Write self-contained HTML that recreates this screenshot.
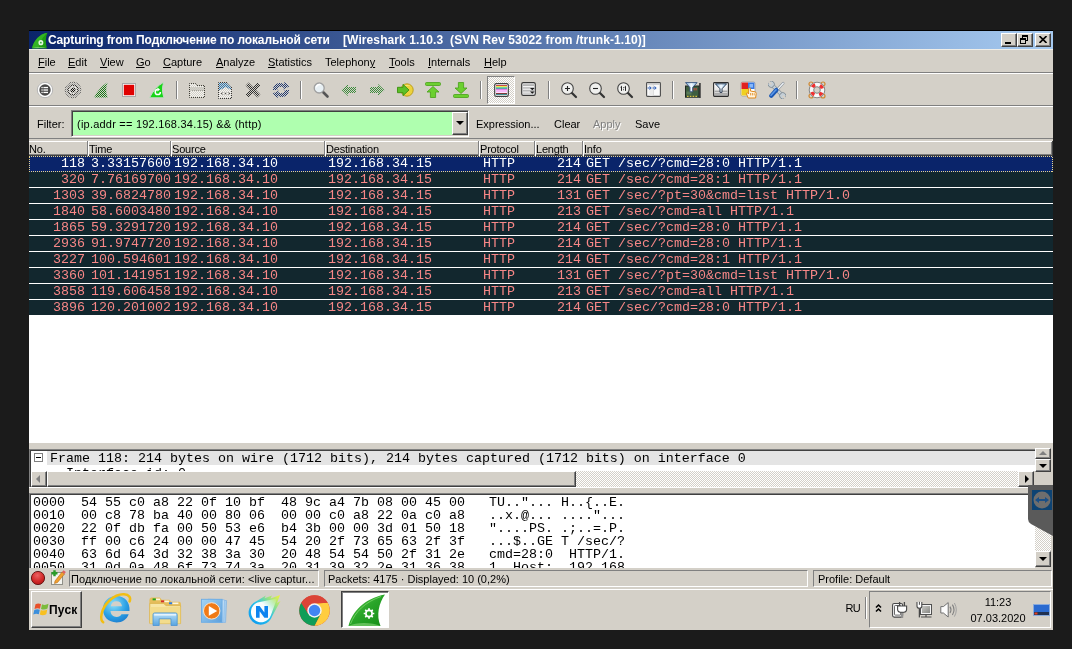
<!DOCTYPE html>
<html><head><meta charset="utf-8">
<style>
*{box-sizing:border-box;margin:0;padding:0}
html,body{width:1072px;height:649px;overflow:hidden;background:#1b1b1b;font-family:"Liberation Sans",sans-serif;font-size:11px;color:#000}
#pg{will-change:transform;position:absolute;left:0;top:0;width:1072px;height:649px;overflow:hidden}
.a{position:absolute}
.win{left:29px;top:30px;width:1024px;height:600px;background:#d4d0c8}
#title{left:29px;top:31px;width:1024px;height:18px;background:linear-gradient(to right,#0a246a 0%,#a6caf0 100%);color:#fff;font-weight:bold;font-size:12px;line-height:18px;white-space:nowrap}
#title span{position:absolute;top:0;white-space:pre}
.tb{top:33px;width:16px;height:14px;background:#d4d0c8;border:1px solid;border-color:#fff #404040 #404040 #fff;box-shadow:inset -1px -1px 0 #808080}
.mn{top:56px;font-size:11px;line-height:13px;white-space:pre}
.hl{left:29px;width:1024px;height:1px}
.tx{font-size:11px;line-height:13px;white-space:pre}
.vsep{top:81px;width:2px;height:18px;border-left:1px solid #808080;border-right:1px solid #fff}
.ic{width:20px;height:20px;top:80px}
.hd{top:141px;height:15px;font-size:11px;line-height:17px;letter-spacing:-0.2px;padding-left:0;border-left:1px solid #fff;box-shadow:-1px 0 0 #808080;white-space:pre}
.row{position:absolute;left:29px;width:1024px;height:16px;background:#12272e;color:#f78787;font-family:"Liberation Mono",monospace;font-size:13.33px;line-height:16px;border-bottom:1px solid #fff;white-space:pre;overflow:hidden}
.row.sel{background:#0a246a;color:#fff;border-bottom:none;z-index:2}
.foc{position:absolute;left:29px;top:156px;width:1024px;height:16px;z-index:3;background:repeating-linear-gradient(90deg,#e8d48c 0 1px,transparent 1px 2px) top/100% 1px no-repeat,repeating-linear-gradient(90deg,#e8d48c 0 1px,transparent 1px 2px) bottom/100% 1px no-repeat,repeating-linear-gradient(0deg,#e8d48c 0 1px,transparent 1px 2px) left/1px 100% no-repeat,repeating-linear-gradient(0deg,#e8d48c 0 1px,transparent 1px 2px) right/1px 100% no-repeat}
.c{position:absolute;top:0}
.no{left:0;width:56px;text-align:right}
.tm{left:62px}
.src{left:145px}
.dst{left:299px}
.pr{left:454px}
.ln{left:501px;width:51px;text-align:right}
.inf{left:557px}
.hx{position:absolute;left:0;height:13px;font-family:"Liberation Mono",monospace;font-size:13.33px;line-height:13px;white-space:pre;color:#000}
.hx span{position:absolute;top:0}
.btn{background:#d4d0c8;border:1px solid;border-color:#fff #404040 #404040 #fff;box-shadow:inset -1px -1px 0 #808080,inset 1px 1px 0 #d4d0c8}
.sbtn{background:#d4d0c8;border:1px solid;border-color:#d4d0c8 #404040 #404040 #d4d0c8;box-shadow:inset -1px -1px 0 #808080,inset 1px 1px 0 #fff}
.chk{background-color:#fff;background-image:conic-gradient(#d4d0c8 25%,#fff 0 50%,#d4d0c8 0 75%,#fff 0);background-size:2px 2px}
.sunk{border:1px solid;border-color:#808080 #fff #fff #808080}
</style></head><body><div id="pg">
<div class="a" style="left:29px;top:30px;width:1024px;height:1px;background:#000"></div>
<div class="a win" style="top:31px;height:599px"></div>
<!-- TITLE -->
<div class="a" id="title">
 <span style="left:19px;letter-spacing:-0.125px" id="t1">Capturing from Подключение по локальной сети</span>
 <span style="left:314px;letter-spacing:0.095px" id="t2">[Wireshark 1.10.3  (SVN Rev 53022 from /trunk-1.10)]</span>
</div>
<svg class="a" style="left:30.5px;top:31.5px" width="17.5" height="17" viewBox="0 0 17 16" preserveAspectRatio="none"><path d="M1 15.2 C3 8 8 2 16 0.8 C14 5 14 10 15.4 15.2 Z" fill="#1f9c12"/><path d="M1 15.2 C3 8 8 2 16 0.8 C12 4 8.5 9 7.5 15.2Z" fill="#34b424"/><path d="M1 15.2 C5 13.6 11 13.6 15.4 15.2Z" fill="#86d67a" opacity=".7"/><circle cx="9.6" cy="10" r="2.4" fill="#e4f6e0"/><circle cx="9.6" cy="10" r="0.8" fill="#2aa52a"/></svg>
<div class="a tb" style="left:1001px"><div class="a" style="left:3px;top:8px;width:6px;height:2px;background:#000"></div></div>
<div class="a tb" style="left:1017px"><div class="a" style="left:4px;top:1px;width:6px;height:6px;border:1px solid #000;border-top-width:2px"></div><div class="a" style="left:2px;top:4px;width:6px;height:6px;border:1px solid #000;border-top-width:2px;background:#d4d0c8"></div></div>
<div class="a tb" style="left:1035px"><svg class="a" style="left:3px;top:2px" width="8" height="7" viewBox="0 0 8 7"><path d="M0.5 0 L7.5 7 M7.5 0 L0.5 7" stroke="#000" stroke-width="1.6"/></svg></div>
<!-- MENU -->
<div class="a hl" style="top:49px;background:#f0eee8"></div>
<span class="a mn" style="left:38px"><u>F</u>ile</span><span class="a mn" style="left:68px"><u>E</u>dit</span><span class="a mn" style="left:100px"><u>V</u>iew</span><span class="a mn" style="left:136px"><u>G</u>o</span><span class="a mn" style="left:163px"><u>C</u>apture</span><span class="a mn" style="left:216px"><u>A</u>nalyze</span><span class="a mn" style="left:268px"><u>S</u>tatistics</span><span class="a mn" style="left:325px">Telephon<u>y</u></span><span class="a mn" style="left:389px"><u>T</u>ools</span><span class="a mn" style="left:428px"><u>I</u>nternals</span><span class="a mn" style="left:484px"><u>H</u>elp</span>
<div class="a hl" style="top:72px;background:#808080"></div><div class="a hl" style="top:73px;background:#fff"></div>
<!-- TOOLBAR -->
<svg class="a" width="0" height="0" style="left:0;top:0"><defs><pattern id="dz" width="2" height="2" patternUnits="userSpaceOnUse"><rect width="1" height="1" fill="#d4d0c8"/><rect x="1" y="1" width="1" height="1" fill="#d4d0c8"/></pattern></defs></svg>
<svg class="a" style="left:36px;top:81px" width="18" height="18" viewBox="0 0 18 18" ><circle cx="9" cy="9" r="7.7" fill="#fff" stroke="#b4b4b4" stroke-width="1"/><circle cx="9" cy="9" r="5.7" fill="#484848"/><g fill="#fff"><rect x="7.4" y="5.9" width="4.6" height="1.3"/><rect x="7.4" y="8.35" width="4.6" height="1.3"/><rect x="7.4" y="10.8" width="4.6" height="1.3"/><rect x="5.4" y="5.9" width="1.3" height="1.3"/><rect x="5.4" y="8.35" width="1.3" height="1.3"/><rect x="5.4" y="10.8" width="1.3" height="1.3"/></g></svg>
<svg class="a" style="left:64px;top:81px" width="18" height="18" viewBox="0 0 18 18" ><circle cx="9" cy="9" r="7.8" fill="#b8b8b8" stroke="#606060" stroke-width="1"/><circle cx="9" cy="9" r="5.8" fill="#303030"/><circle cx="9" cy="9" r="4" fill="#f4f4f4"/><circle cx="9" cy="9" r="2.6" fill="#101010"/><rect width="18" height="18" fill="url(#dz)"/></svg>
<svg class="a" style="left:92px;top:81px" width="18" height="18" viewBox="0 0 18 18" ><path d="M1.8 16.8 C5 10 9.5 4.5 15.8 1.2 C14 6 14 11.5 15.8 16.8Z" fill="#147814" stroke="#c0d0c0" stroke-width=".6"/><rect width="18" height="18" fill="url(#dz)"/></svg>
<svg class="a" style="left:121px;top:82px" width="16" height="16" viewBox="0 0 16 16" ><rect x="1.5" y="1.5" width="13" height="13" fill="#fafafa" stroke="#a8a8a8" stroke-width="1"/><rect x="2.8" y="2.8" width="10.4" height="10.4" fill="#e00000"/></svg>
<svg class="a" style="left:148px;top:81px" width="18" height="18" viewBox="0 0 18 18" ><path d="M1.5 16.8 C5 10 9.5 4.5 15.8 1.2 C14 6 14 11.5 16 16.8Z" fill="#18d418" stroke="#c8d8c8" stroke-width="1"/><path d="M12.4 11 A2.6 2.6 0 1 1 9.8 8.4" fill="none" stroke="#fff" stroke-width="1.5"/><path d="M9.4 6.4 L12 8.4 L9.4 10.4Z" fill="#fff"/></svg>
<svg class="a" style="left:188px;top:81px" width="18" height="18" viewBox="0 0 18 18" ><path d="M1.5 2.5 h6 l1 2 h8 v12 h-15Z" fill="#f4f4f0" stroke="#404038" stroke-width="1"/><path d="M2.5 9.5 h13" stroke="#a0a098" stroke-width="1"/><path d="M2 6 h14 v3 h-14Z" fill="#c8c8c0"/><rect width="18" height="18" fill="url(#dz)"/></svg>
<svg class="a" style="left:216px;top:81px" width="18" height="18" viewBox="0 0 18 18" ><path d="M2.5 1.5 h8.5 l4.5 4.5 v11.5 h-13Z" fill="#f4f4f2" stroke="#383838" stroke-width="1"/><path d="M3 2 h7.8 l4.2 4.2 v2.8 l-5 -3 l-7 3.5Z" fill="#2878b8"/><path d="M5 11.5h2v2H5zM8.5 11.5h2v2h-2zM12 11.5h2v2h-2z" fill="#505050"/><rect width="18" height="18" fill="url(#dz)"/></svg>
<svg class="a" style="left:244px;top:81px" width="18" height="18" viewBox="0 0 18 18" ><path d="M1.6 4.6 L4.6 1.6 L9 6 L13.4 1.6 L16.4 4.6 L12 9 L16.4 13.4 L13.4 16.4 L9 12 L4.6 16.4 L1.6 13.4 L6 9Z" fill="#303030"/><rect width="18" height="18" fill="url(#dz)"/></svg>
<svg class="a" style="left:272px;top:81px" width="18" height="18" viewBox="0 0 18 18" ><path d="M1 9 C1 3 7 0.6 12 3 L12.6 0.8 L17.2 5.6 L11 8.4 L11.4 6.2 C8.6 5 5.4 6 5.2 9Z" fill="#203870"/><path d="M17 9 C17 15 11 17.4 6 15 L5.4 17.2 L0.8 12.4 L7 9.6 L6.6 11.8 C9.4 13 12.6 12 12.8 9Z" fill="#203870"/><rect width="18" height="18" fill="url(#dz)"/></svg>
<svg class="a" style="left:312px;top:81px" width="18" height="18" viewBox="0 0 18 18" ><path d="M10.5 10.5 L15.5 15.5" stroke="#555" stroke-width="2.6" stroke-linecap="round"/><circle cx="7.2" cy="7" r="5" fill="#e8f0f4" stroke="#a0a0a0" stroke-width="1.3"/><path d="M4.2 6.4 A3.2 3.2 0 0 1 8.5 3.8" stroke="#fff" stroke-width="1.5" fill="none"/></svg>
<svg class="a" style="left:340px;top:81px" width="18" height="18" viewBox="0 0 18 18" ><path d="M1.5 9 L8 3 L8 6 L16 6 L16 12 L8 12 L8 15Z" fill="#3c8c3c"/><rect width="18" height="18" fill="url(#dz)"/></svg>
<svg class="a" style="left:368px;top:81px" width="18" height="18" viewBox="0 0 18 18" ><path d="M16.5 9 L10 3 L10 6 L2 6 L2 12 L10 12 L10 15Z" fill="#3c8c3c"/><rect width="18" height="18" fill="url(#dz)"/></svg>
<svg class="a" style="left:396px;top:81px" width="18" height="18" viewBox="0 0 18 18" ><circle cx="11" cy="9" r="6.2" fill="#ecd23c" stroke="#b89818" stroke-width=".9"/><path d="M8 5 A6 6 0 0 1 15 5.5 A8 8 0 0 0 8 5Z" fill="#fff6b0"/><path d="M1.5 6.3 L7 6.3 L7 3.3 L13 9 L7 14.7 L7 11.7 L1.5 11.7Z" fill="#5cc028" stroke="#3c9010" stroke-width=".9"/></svg>
<svg class="a" style="left:424px;top:81px" width="18" height="18" viewBox="0 0 18 18" ><rect x="1.5" y="1.5" width="15" height="3" rx="1" fill="#6cd030" stroke="#48a018" stroke-width=".8"/><path d="M9 5.5 L15 11 L11.6 11 L11.6 16.5 L6.4 16.5 L6.4 11 L3 11Z" fill="#6cd030" stroke="#48a018" stroke-width=".8"/></svg>
<svg class="a" style="left:452px;top:81px" width="18" height="18" viewBox="0 0 18 18" ><rect x="1.5" y="13.5" width="15" height="3" rx="1" fill="#6cd030" stroke="#48a018" stroke-width=".8"/><path d="M9 12.5 L15 7 L11.6 7 L11.6 1.5 L6.4 1.5 L6.4 7 L3 7Z" fill="#6cd030" stroke="#48a018" stroke-width=".8"/></svg>
<div class="a chk" style="left:487px;top:76px;width:28px;height:28px;border:1px solid;border-color:#808080 #fff #fff #808080"></div>
<svg class="a" style="left:494px;top:82.8px" width="15" height="14" viewBox="0 0 15 14" ><rect x="0.7" y="0.7" width="13.6" height="12.6" rx="1.6" fill="#fff" stroke="#404040" stroke-width="1.2"/><rect x="2" y="2" width="11" height="1" fill="#c84848"/><rect x="2" y="3" width="11" height="1" fill="#f0e850"/><rect x="2" y="4" width="11" height="1" fill="#70d0a0"/><rect x="2" y="5" width="11" height="1" fill="#58a8a8"/><rect x="2" y="6" width="11" height="1" fill="#e878e8"/><rect x="2" y="7" width="11" height="2.4" fill="#f8b8f8"/><rect x="2" y="10" width="11" height="1" fill="#803838"/><rect x="2" y="11" width="11" height="1" fill="#409090"/></svg>
<svg class="a" style="left:520.9px;top:82px" width="15" height="14" viewBox="0 0 15 14" ><rect x="0.7" y="0.7" width="13.6" height="12.6" rx="1.6" fill="#f4f4f4" stroke="#383838" stroke-width="1.2"/><rect x="2" y="2.2" width="11" height="1.8" fill="#b4b4b4"/><rect x="2" y="5" width="11" height="1.8" fill="#c4c4c4"/><rect x="2" y="7.8" width="11" height="1.8" fill="#b8b8b8"/><rect x="2" y="10.4" width="11" height="1.6" fill="#d0d0d0"/><path d="M9 6 h4.6 l-2.3 2.2Z M9 9.6 h4.6 l-2.3 2.2Z" fill="#181818"/></svg>
<svg class="a" style="left:559.5px;top:81px" width="18" height="18" viewBox="0 0 18 18" ><path d="M11.5 11.5 L16 16" stroke="#333" stroke-width="2.2" stroke-linecap="round"/><circle cx="7.5" cy="7.5" r="5.8" fill="#f0f0ee" stroke="#444" stroke-width="1.1"/><path d="M5 7.5h5M7.5 5v5" stroke="#222" stroke-width="1.1"/></svg>
<svg class="a" style="left:587.5px;top:81px" width="18" height="18" viewBox="0 0 18 18" ><path d="M11.5 11.5 L16 16" stroke="#333" stroke-width="2.2" stroke-linecap="round"/><circle cx="7.5" cy="7.5" r="5.8" fill="#f0f0ee" stroke="#444" stroke-width="1.1"/><path d="M5 7.5h5" stroke="#222" stroke-width="1.1"/></svg>
<svg class="a" style="left:616px;top:81px" width="18" height="18" viewBox="0 0 18 18" ><path d="M11.5 11.5 L16 16" stroke="#333" stroke-width="2.2" stroke-linecap="round"/><circle cx="7.5" cy="7.5" r="5.8" fill="#f0f0ee" stroke="#444" stroke-width="1.1"/><path d="M5.5 5.3v4.6M9.5 5.3v4.6M4.6 6.2l.9-.9M8.6 6.2l.9-.9" stroke="#222" stroke-width="1"/><rect x="7.1" y="6.3" width=".9" height=".9" fill="#222"/><rect x="7.1" y="8.3" width=".9" height=".9" fill="#222"/></svg>
<svg class="a" style="left:646px;top:82.1px" width="15" height="15" viewBox="0 0 15 15" ><rect x="0.6" y="0.6" width="13.8" height="13.8" rx=".8" fill="#fafafa" stroke="#4c4c4c" stroke-width="1.1"/><rect x="1.2" y="1.2" width="12.6" height="1.6" fill="#c8c8c8"/><rect x="6.6" y="2.8" width="1.2" height="11" fill="#d8d8d8"/><rect x="3.4" y="2.8" width="3.2" height="11" fill="#ececec"/><path d="M1.6 6h3.4M3.6 4.4L5.2 6L3.6 7.6M6.6 6h3.4M8.6 4.4L10.2 6L8.6 7.6" stroke="#2a5cb8" stroke-width="1" fill="none"/></svg>
<svg class="a" style="left:684px;top:81px" width="18" height="18" viewBox="0 0 18 18" ><defs><linearGradient id="fn" x1="0" y1="0" x2="1" y2="0"><stop offset="0" stop-color="#7ab0e0"/><stop offset=".5" stop-color="#f4faff"/><stop offset="1" stop-color="#8cbce6"/></linearGradient></defs><rect x="15" y="2" width="1.8" height="15" fill="#484848"/><rect x="1.5" y="5" width="13.5" height="11.2" fill="#3e5e40" stroke="#202820" stroke-width="1"/><rect x="2.5" y="10.5" width="5" height="3" fill="#587a58"/><rect x="9.5" y="7" width="1.2" height="2.4" fill="#c05040"/><rect x="11.5" y="7" width="1.2" height="2.4" fill="#c05040"/><path d="M3 15.4h1.6M5.8 15.4h1.6M8.6 15.4h1.6M11.4 15.4h1.6" stroke="#d8c040" stroke-width="1.4"/><path d="M1.5 1.6 h11.6 l-4.4 4.8 v4.4 h-2.8 v-4.4Z" fill="url(#fn)" stroke="#34507a" stroke-width=".9"/></svg>
<svg class="a" style="left:712.5px;top:81.6px" width="16" height="15" viewBox="0 0 16 15" ><defs><linearGradient id="dfb" x1="0" y1="0" x2="0" y2="1"><stop offset="0" stop-color="#ffffff"/><stop offset=".55" stop-color="#e8e8e8"/><stop offset="1" stop-color="#b8b8b8"/></linearGradient></defs><rect x="0.6" y="0.6" width="14.8" height="13.8" rx=".8" fill="url(#dfb)" stroke="#2c2c2c" stroke-width="1.1"/><rect x="1.6" y="8.6" width="12.8" height="1.4" fill="#a8a8a8"/><rect x="1.6" y="11.2" width="12.8" height="1.4" fill="#a0a0a0"/><path d="M2.4 1.8 h11.2 l-4.6 5 v3.6 h-2 v-3.6Z" fill="url(#fn)" stroke="#1c2c44" stroke-width=".9"/></svg>
<svg class="a" style="left:740px;top:81px" width="18" height="18" viewBox="0 0 18 18" ><rect x="1" y="1" width="14" height="14" rx="1.5" fill="#fff" stroke="#888" stroke-width=".6"/><rect x="1.5" y="1.5" width="6.5" height="6.5" fill="#e02020"/><rect x="8" y="1.5" width="6.5" height="6.5" fill="#3878e0"/><rect x="1.5" y="8" width="6.5" height="6.5" fill="#f0d020"/><rect x="9.5" y="3" width="3.5" height="3.5" fill="#88b8f8"/><path d="M8.2 17 L6.3 12.5 L7.6 11.8 L8.6 13 L8.6 7.4 Q9.5 6.4 10.4 7.4 L10.4 10 L15 10.8 Q16.4 11.2 16.2 12.6 L15.6 17Z" fill="#fff4e0" stroke="#e08818" stroke-width="1"/><path d="M10.6 12v2.4M12.4 12v2.4M14.2 12.2v2.2" stroke="#e08818" stroke-width=".8"/></svg>
<svg class="a" style="left:768px;top:81px" width="18" height="18" viewBox="0 0 18 18" ><g transform="rotate(-45 9 9)"><rect x="7.4" y="-0.5" width="3.2" height="19" rx="1" fill="#c4ced6" stroke="#7c8890" stroke-width=".8"/><circle cx="9" cy="0.8" r="3.2" fill="#c4ced6" stroke="#7c8890" stroke-width=".8"/><rect x="7.9" y="-3" width="2.2" height="4" fill="#d4d0c8"/><circle cx="9" cy="17.2" r="3.2" fill="#c4ced6" stroke="#7c8890" stroke-width=".8"/><rect x="7.9" y="17" width="2.2" height="4" fill="#d4d0c8"/></g><path d="M15.2 2.2 L8.6 9.4" stroke="#8c949c" stroke-width="2.6" stroke-linecap="round"/><path d="M15.2 2.2 L8.6 9.4" stroke="#eef2f6" stroke-width="1.3" stroke-linecap="round"/><path d="M8.4 9 L3.2 14.8" stroke="#1c58b4" stroke-width="4.2" stroke-linecap="round"/><path d="M8 8.8 L3 14.2" stroke="#5c98e8" stroke-width="1.6" stroke-linecap="round"/></svg>
<svg class="a" style="left:808px;top:81px" width="18" height="18" viewBox="0 0 18 18" ><g fill="none" stroke="#d08830" stroke-width="1.2"><circle cx="3" cy="3" r="2"/><circle cx="15" cy="3" r="2"/><circle cx="3" cy="15" r="2"/><circle cx="15" cy="15" r="2"/></g><circle cx="9" cy="9" r="5.5" fill="none" stroke="#f8f8f8" stroke-width="4.4"/><circle cx="9" cy="9" r="5.5" fill="none" stroke="#f03030" stroke-width="3.4" stroke-dasharray="3.6 5.04" stroke-dashoffset="-2.52"/><circle cx="9" cy="9" r="7.8" fill="none" stroke="#707070" stroke-width=".8"/><circle cx="9" cy="9" r="3.3" fill="#d4d0c8" stroke="#707070" stroke-width=".8"/></svg>
<div class="a vsep" style="left:176px"></div>
<div class="a vsep" style="left:300px"></div>
<div class="a vsep" style="left:480px"></div>
<div class="a vsep" style="left:548px"></div>
<div class="a vsep" style="left:672px"></div>
<div class="a vsep" style="left:796px"></div>

<div class="a hl" style="top:105px;background:#808080"></div><div class="a hl" style="top:106px;background:#fff"></div>
<!-- FILTER -->
<span class="a tx" style="left:37px;top:118px">Filter:</span>
<div class="a" style="left:71px;top:110px;width:398px;height:27px;background:#afffaf;border:1px solid;border-color:#808080 #fff #fff #808080;box-shadow:inset 1px 1px 0 #404040,inset -1px -1px 0 #d4d0c8"></div>
<span class="a tx" style="left:77px;top:118px;letter-spacing:0.22px" id="ftxt">(ip.addr == 192.168.34.15) &amp;&amp; (http)</span>
<div class="a btn" style="left:452px;top:112px;width:16px;height:23px"><div class="a" style="left:3px;top:8px;border:4px solid transparent;border-top:4px solid #000;border-bottom:none"></div></div>
<span class="a tx" style="left:476px;top:118px">Expression...</span>
<span class="a tx" style="left:554px;top:118px">Clear</span>
<span class="a tx" style="left:593px;top:118px;color:#808080;text-shadow:1px 1px 0 #fff">Apply</span>
<span class="a tx" style="left:635px;top:118px">Save</span>
<div class="a hl" style="top:138px;background:#808080"></div><div class="a hl" style="top:141px;background:#fff"></div><div class="a hl" style="top:154px;background:#808080"></div><div class="a hl" style="top:155px;background:#404040"></div><div class="a" style="left:1052px;top:141px;width:1px;height:15px;background:#404040"></div><div class="a" style="left:1051px;top:142px;width:1px;height:13px;background:#808080"></div>
<!-- HEADER -->
<span class="a hd" style="left:29px;border:none;box-shadow:none">No.</span><span class="a hd" style="left:88px">Time</span><span class="a hd" style="left:171px">Source</span><span class="a hd" style="left:325px">Destination</span><span class="a hd" style="left:479px">Protocol</span><span class="a hd" style="left:535px">Length</span><span class="a hd" style="left:583px">Info</span>

<!-- LIST -->
<div class="a" style="left:29px;top:156px;width:1024px;height:287px;background:#fff"></div>
<div class="row sel" style="top:156px"><span class="c no">118</span><span class="c tm">3.33157600</span><span class="c src">192.168.34.10</span><span class="c dst">192.168.34.15</span><span class="c pr">HTTP</span><span class="c ln">214</span><span class="c inf">GET /sec/?cmd=28:0 HTTP/1.1</span></div>
<div class="row" style="top:172px"><span class="c no">320</span><span class="c tm">7.76169700</span><span class="c src">192.168.34.10</span><span class="c dst">192.168.34.15</span><span class="c pr">HTTP</span><span class="c ln">214</span><span class="c inf">GET /sec/?cmd=28:1 HTTP/1.1</span></div>
<div class="row" style="top:188px"><span class="c no">1303</span><span class="c tm">39.6824780</span><span class="c src">192.168.34.10</span><span class="c dst">192.168.34.15</span><span class="c pr">HTTP</span><span class="c ln">131</span><span class="c inf">GET /sec/?pt=30&amp;cmd=list HTTP/1.0</span></div>
<div class="row" style="top:204px"><span class="c no">1840</span><span class="c tm">58.6003480</span><span class="c src">192.168.34.10</span><span class="c dst">192.168.34.15</span><span class="c pr">HTTP</span><span class="c ln">213</span><span class="c inf">GET /sec/?cmd=all HTTP/1.1</span></div>
<div class="row" style="top:220px"><span class="c no">1865</span><span class="c tm">59.3291720</span><span class="c src">192.168.34.10</span><span class="c dst">192.168.34.15</span><span class="c pr">HTTP</span><span class="c ln">214</span><span class="c inf">GET /sec/?cmd=28:0 HTTP/1.1</span></div>
<div class="row" style="top:236px"><span class="c no">2936</span><span class="c tm">91.9747720</span><span class="c src">192.168.34.10</span><span class="c dst">192.168.34.15</span><span class="c pr">HTTP</span><span class="c ln">214</span><span class="c inf">GET /sec/?cmd=28:0 HTTP/1.1</span></div>
<div class="row" style="top:252px"><span class="c no">3227</span><span class="c tm">100.594601</span><span class="c src">192.168.34.10</span><span class="c dst">192.168.34.15</span><span class="c pr">HTTP</span><span class="c ln">214</span><span class="c inf">GET /sec/?cmd=28:1 HTTP/1.1</span></div>
<div class="row" style="top:268px"><span class="c no">3360</span><span class="c tm">101.141951</span><span class="c src">192.168.34.10</span><span class="c dst">192.168.34.15</span><span class="c pr">HTTP</span><span class="c ln">131</span><span class="c inf">GET /sec/?pt=30&amp;cmd=list HTTP/1.0</span></div>
<div class="row" style="top:284px"><span class="c no">3858</span><span class="c tm">119.606458</span><span class="c src">192.168.34.10</span><span class="c dst">192.168.34.15</span><span class="c pr">HTTP</span><span class="c ln">213</span><span class="c inf">GET /sec/?cmd=all HTTP/1.1</span></div>
<div class="row" style="top:300px"><span class="c no">3896</span><span class="c tm">120.201002</span><span class="c src">192.168.34.10</span><span class="c dst">192.168.34.15</span><span class="c pr">HTTP</span><span class="c ln">214</span><span class="c inf">GET /sec/?cmd=28:0 HTTP/1.1</span></div>

<div class="foc"></div>
<!-- DETAILS -->
<div class="a" style="left:29px;top:449px;width:1007px;height:22px;background:#fff;border-top:1px solid #808080;border-left:1px solid #808080;overflow:hidden"><div class="a" style="left:0;top:0;width:1007px;height:1px;background:#404040"></div><div class="a" style="left:0;top:0;width:1px;height:23px;background:#404040"></div>
 <div class="a" style="left:17px;top:1px;width:990px;height:14px;background:#e4e4e4"></div>
 <div class="a" style="left:4px;top:3px;width:9px;height:9px;border:1px solid #808080;background:#fff"><div class="a" style="left:1px;top:3px;width:5px;height:1px;background:#000"></div></div>
 <span class="a" style="left:20px;top:2px;font-family:'Liberation Mono',monospace;font-size:13.33px;line-height:14px;white-space:pre" id="frm">Frame 118: 214 bytes on wire (1712 bits), 214 bytes captured (1712 bits) on interface 0</span>
 <span class="a" style="left:36px;top:17px;font-family:'Liberation Mono',monospace;font-size:13.33px;line-height:14px;white-space:pre">Interface id: 0</span>
</div>
<div class="a btn" style="left:1035px;top:448px;width:16px;height:11px"><div class="a" style="left:3px;top:2px;border:4px solid transparent;border-bottom:4px solid #808080;border-top:none"></div></div>
<div class="a btn" style="left:1035px;top:459px;width:16px;height:13px"><div class="a" style="left:3px;top:4px;border:4px solid transparent;border-top:4px solid #000;border-bottom:none"></div></div>
<!-- hscroll -->
<div class="a chk" style="left:31px;top:471px;width:1003px;height:16px"></div>
<div class="a btn" style="left:31px;top:471px;width:16px;height:16px"><div class="a" style="left:4px;top:3px;border:4px solid transparent;border-right:4px solid #808080;border-left:none"></div></div>
<div class="a btn" style="left:47px;top:471px;width:529px;height:16px"></div>
<div class="a btn" style="left:1018px;top:471px;width:16px;height:16px"><div class="a" style="left:6px;top:3px;border:4px solid transparent;border-left:4px solid #000;border-right:none"></div></div>
<div class="a" style="left:29px;top:471px;width:1px;height:16px;background:#808080"></div><div class="a" style="left:30px;top:471px;width:1px;height:16px;background:#404040"></div><div class="a" style="left:29px;top:487px;width:1007px;height:1px;background:#fff"></div>
<!-- HEX -->
<div class="a" id="hex" style="left:29px;top:493px;width:1006px;height:75px;background:#fff;border-top:1px solid #808080;border-left:1px solid #808080;overflow:hidden"><div class="a" style="left:0;top:0;width:1007px;height:1px;background:#404040"></div><div class="a" style="left:0;top:0;width:1px;height:80px;background:#404040"></div>
<div class="hx" style="top:2px"><span style="left:3px">0000</span><span style="left:51px">54 55 c0 a8 22 0f 10 bf  48 9c a4 7b 08 00 45 00</span><span style="left:459px">TU.."... H..{..E.</span></div>
<div class="hx" style="top:15px"><span style="left:3px">0010</span><span style="left:51px">00 c8 78 ba 40 00 80 06  00 00 c0 a8 22 0a c0 a8</span><span style="left:459px">..x.@... ...."...</span></div>
<div class="hx" style="top:28px"><span style="left:3px">0020</span><span style="left:51px">22 0f db fa 00 50 53 e6  b4 3b 00 00 3d 01 50 18</span><span style="left:459px">"....PS. .;..=.P.</span></div>
<div class="hx" style="top:41px"><span style="left:3px">0030</span><span style="left:51px">ff 00 c6 24 00 00 47 45  54 20 2f 73 65 63 2f 3f</span><span style="left:459px">...$..GE T /sec/?</span></div>
<div class="hx" style="top:54px"><span style="left:3px">0040</span><span style="left:51px">63 6d 64 3d 32 38 3a 30  20 48 54 54 50 2f 31 2e</span><span style="left:459px">cmd=28:0  HTTP/1.</span></div>
<div class="hx" style="top:67px"><span style="left:3px">0050</span><span style="left:51px">31 0d 0a 48 6f 73 74 3a  20 31 39 32 2e 31 36 38</span><span style="left:459px">1..Host:  192.168</span></div>

</div>
<div class="a chk" style="left:1035px;top:494px;width:16px;height:58px"></div>
<div class="a btn" style="left:1035px;top:551px;width:16px;height:16px"><div class="a" style="left:3px;top:5px;border:4px solid transparent;border-top:4px solid #000;border-bottom:none"></div></div>
<!-- teamviewer -->
<svg class="a" style="left:1026px;top:484px" width="27" height="54" viewBox="0 0 27 54"><path d="M2 1 L27 1 L27 52 L5 40 Q2 38 2 35 Z" fill="#5a5a5a"/><rect x="6" y="6" width="20" height="20" fill="#0d4373"/><circle cx="16" cy="16" r="8.5" fill="#6e6e6e"/><path d="M9 16 L13 13 L13 15 L19 15 L19 13 L23 16 L19 19 L19 17 L13 17 L13 19Z" fill="#1a4f86"/></svg>
<!-- STATUS -->
<div class="a" style="left:29px;top:568px;width:1024px;height:20px;background:#d4d0c8"></div>
<svg class="a" style="left:30px;top:570px" width="16" height="16" viewBox="0 0 16 16"><defs><radialGradient id="rg" cx=".45" cy=".3" r=".75"><stop offset="0" stop-color="#ec6262"/><stop offset=".6" stop-color="#d22a2a"/><stop offset="1" stop-color="#b01616"/></radialGradient></defs><circle cx="8" cy="8" r="6.6" fill="url(#rg)" stroke="#5c1010" stroke-width="0.9"/></svg>
<svg class="a" style="left:49px;top:569px" width="17" height="17" viewBox="0 0 17 17"><rect x="2.5" y="3.5" width="11" height="12" fill="#f4f4f0" stroke="#909088"/><path d="M2.5 4.2h6M5.5 1.2v6" stroke="#2a9a2a" stroke-width="2.4"/><path d="M6 12 L13 3 L15.5 5 L8.5 13.5 L5.5 14.5Z" fill="#f0a030" stroke="#b06818" stroke-width=".6"/><path d="M13 3 L14.5 1.2 L16.8 3 L15.5 5Z" fill="#e06060"/></svg>
<div class="a sunk" style="left:69px;top:570px;width:250px;height:17px"></div>
<span class="a tx" style="left:71px;top:573px;letter-spacing:0.1px" id="st1">Подключение по локальной сети: &lt;live captur...</span>
<div class="a sunk" style="left:324px;top:570px;width:484px;height:17px"></div>
<span class="a tx" style="left:328px;top:573px" id="st2">Packets: 4175 · Displayed: 10 (0,2%)</span>
<div class="a sunk" style="left:813px;top:570px;width:239px;height:17px"></div>
<span class="a tx" style="left:818px;top:573px">Profile: Default</span>
<!-- TASKBAR -->
<div class="a hl" style="top:588px;background:#d4d0c8"></div><div class="a hl" style="top:589px;background:#fff"></div>
<div class="a btn" style="left:31px;top:591px;width:51px;height:37px"></div>
<svg class="a" style="left:33px;top:601px" width="16" height="15" viewBox="0 0 16 16" preserveAspectRatio="none"><path d="M2.5 3.5 Q5 2 8 3.2 L7 8.2 Q4.5 7 1.5 8.5Z" fill="#e8502a"/><path d="M9 3.5 Q12 5 15.5 3 L14.5 8 Q11.5 10 8 8.5Z" fill="#7cbb3c"/><path d="M1.3 9.5 Q4 8 6.8 9.2 L5.8 14.2 Q3 13 0.3 14.5Z" fill="#3c8fdc"/><path d="M7.8 9.6 Q11 11 14.3 9 L13.3 14 Q10 16 6.8 14.5Z" fill="#f8c020"/></svg>
<span class="a" style="left:49px;top:603px;font-size:12px;font-weight:bold;line-height:14px;letter-spacing:0.2px" id="pusk">Пуск</span>
<svg class="a" style="left:90px;top:590px" width="250" height="40" viewBox="90 590 250 40"><defs><radialGradient id="ieg" cx=".4" cy=".3" r=".8"><stop offset="0" stop-color="#8ee0fa"/><stop offset=".6" stop-color="#2aa0e4"/><stop offset="1" stop-color="#1a78cc"/></radialGradient><linearGradient id="blu" x1="0" y1="0" x2="0" y2="1"><stop offset="0" stop-color="#b8e0f8"/><stop offset="1" stop-color="#58a4e0"/></linearGradient></defs><g transform="translate(-0.5,-35.5) scale(1,1.056)"><path d="M117 598 C108.5 598 103.5 603.6 103.5 610.6 C103.5 617.8 109 623 117 623 C123 623 127.4 620 129.2 615.2 L122 615.2 C121 617 119.4 617.8 117.2 617.8 C113.6 617.8 111.3 615.6 111 612.2 L130 612.2 C130.6 604 125.6 598 117 598Z M111.2 607.8 C111.8 604.8 113.9 603 117 603 C120.1 603 122.2 604.8 122.5 607.8Z" fill="url(#ieg)"/></g><path d="M129.6 601.4 C131.2 597.6 129 594.6 124 594.3 C114 593.8 103.6 604 101.6 614 C100.7 618.5 101.4 621 103.2 622.2" fill="none" stroke="#f2be12" stroke-width="2.5" stroke-linecap="round"/><path d="M149.4 600 Q149.4 598 151.4 597.6 h8.5 l2 2.2 h7.5 l2 2 h8 Q181 602 181 604 v19 h-31.6Z" fill="#e6be5c"/><rect x="152.6" y="598.4" width="3.2" height="1.9" fill="#22a422"/><rect x="161" y="600.4" width="3.2" height="1.9" fill="#d42c2c"/><rect x="169" y="602.3" width="3.2" height="1.9" fill="#2c7ce6"/><rect x="156" y="598.6" width="4" height="1.6" fill="#fbf6e0"/><rect x="164.4" y="600.6" width="4.6" height="1.6" fill="#fbf6e0"/><rect x="172.4" y="602.5" width="6" height="1.6" fill="#fbf6e0"/><path d="M149.8 603.4 h14 l2 2.2 h14.8 v18 h-30.8Z" fill="#f7e6a6" stroke="#d9b24c" stroke-width=".8"/><path d="M150.2 607 h30 v16.4 h-30Z" fill="#f3dc8c"/><path d="M153 614.6 q0 -1.7 1.7 -1.7 h20.8 q1.7 0 1.7 1.7 v10.9 h-6.2 v-6.7 h-11.8 v6.7 h-6.2Z" fill="url(#blu)" stroke="#4a94d4" stroke-width=".8"/><path d="M154.2 614 h21.8 v1.6 h-21.8Z" fill="#e4f3fd"/><defs><linearGradient id="wmp" x1="0" y1="0" x2="1" y2="1"><stop offset="0" stop-color="#a4d4f4"/><stop offset="1" stop-color="#5c9fdc"/></linearGradient></defs><path d="M210 599.4 L226.6 600.6 L225.6 622.4 L209 622Z" fill="#a4cef0" stroke="#7fb2e2" stroke-width=".7"/><path d="M208 599.2 L224.4 599.8 L223.6 622.5 L207 622Z" fill="#c4e0f6" stroke="#86b8e6" stroke-width=".7"/><rect x="201.5" y="599.3" width="20.6" height="23" fill="url(#wmp)" stroke="#6cace4" stroke-width=".9"/><circle cx="211.7" cy="610.9" r="8.2" fill="#f07a16" stroke="#fce6cc" stroke-width="1"/><path d="M208.8 606 L217.2 610.9 L208.8 615.8Z" fill="#fff"/><defs><linearGradient id="mx" gradientUnits="userSpaceOnUse" x1="252" y1="622" x2="280" y2="595"><stop offset="0" stop-color="#0c9cf0"/><stop offset=".45" stop-color="#2cc4e8"/><stop offset=".7" stop-color="#8ee08a"/><stop offset="1" stop-color="#f6f23c"/></linearGradient><linearGradient id="mxw" gradientUnits="userSpaceOnUse" x1="254" y1="620" x2="277" y2="598"><stop offset="0" stop-color="#fff"/><stop offset=".55" stop-color="#fff" stop-opacity=".95"/><stop offset="1" stop-color="#fff" stop-opacity="0"/></linearGradient></defs><path d="M280 595 L277 603 L280.5 601 L272 616.5 A12 12 0 1 1 256 601.6 L265.8 595.4 L264.6 598.2 L272 595.4 L270.6 598.6Z" fill="url(#mx)"/><path d="M277 598.5 L270.8 615.4 A10.2 10.2 0 1 1 257.4 602.6Z" fill="url(#mxw)"/><path d="M256 617.8 V606 H259.6 L264.4 612.6 V606 H268 V617.8 H264.4 L259.6 611.2 V617.8Z" fill="#0c84f0"/><circle cx="314.5" cy="610.5" r="15.3" fill="#db4437"/><path d="M327.75 602.85 A15.3 15.3 0 0 1 314.50 625.80 L320.56 614.00 L314.50 603.50 L327.75 602.85Z" fill="#ffcd40"/><path d="M314.50 625.80 A15.3 15.3 0 0 1 301.25 602.85 L308.44 614.00 L320.56 614.00 L314.50 625.80Z" fill="#0f9d58"/><path d="M301.25 602.85 A15.3 15.3 0 0 1 327.75 602.85 L314.50 603.50 L308.44 614.00 L301.25 602.85Z" fill="#db4437"/><circle cx="314.5" cy="610.5" r="7.2" fill="#f4f4f4"/><circle cx="314.5" cy="610.5" r="5.7" fill="#4285f4"/></svg>

<div class="a" style="left:341px;top:591px;width:48px;height:37px;background:#fff;border:1px solid;border-color:#404040 #fff #fff #404040;box-shadow:inset 1px 1px 0 #808080"></div>
<svg class="a" style="left:343px;top:592px" width="46" height="36" viewBox="343 592 46 36"><defs><linearGradient id="fin" x1="0" y1="0" x2="1" y2="1"><stop offset="0" stop-color="#5ccc4c"/><stop offset=".5" stop-color="#28a428"/><stop offset="1" stop-color="#148c14"/></linearGradient></defs><path d="M348.5 626 C352 612 364 598.5 385 594.5 C379 603 376 615 380.5 626 Z" fill="url(#fin)"/><path d="M348.5 626 C356 622 372 622 380.5 626Z" fill="#9ae08a" opacity=".55"/><path d="M350.5 624 C355 612 365 602 381 596.5" stroke="#7ad86a" stroke-width="1" fill="none" opacity=".8"/><circle cx="369" cy="613.5" r="3.1" fill="none" stroke="#fff" stroke-width="1.7"/><g stroke="#fff" stroke-width="1.7"><path d="M369 608.2v1.8M369 617v1.8M363.7 613.5h1.8M372.5 613.5h1.8M365.25 609.75l1.3 1.3M371.45 615.95l1.3 1.3M365.25 617.25l1.3-1.3M371.45 611.05l1.3-1.3"/></g></svg>
<!-- tray -->
<span class="a" style="left:845.5px;top:601px;font-size:11px;line-height:14px;letter-spacing:-0.6px">RU</span>
<div class="a" style="left:865px;top:597px;width:2px;height:22px;border-left:1px solid #808080;border-right:1px solid #fff"></div>
<div class="a sunk" style="left:869px;top:591px;width:182px;height:37px"></div>
<svg class="a" style="left:870px;top:595px" width="95" height="30" viewBox="870 595 95 30"><path d="M876 607.6 L878.5 605 L881 607.6 M876 611.6 L878.5 609 L881 611.6" stroke="#000" stroke-width="1.5" fill="none"/><rect x="892.6" y="603.5" width="10" height="13.6" rx="1.6" fill="#fcfcfc" stroke="#484848" stroke-width="1.1"/><rect x="894.5" y="605.5" width="6.2" height="9.6" rx=".8" fill="#fff" stroke="#585858" stroke-width=".9"/><path d="M899.6 602v4M904.4 602v4" stroke="#484848" stroke-width="1.3"/><path d="M897.6 606 h9 v3.4 q0 3 -4.5 3 q-4.5 0 -4.5 -3Z" fill="#fff" stroke="#484848" stroke-width="1.1"/><path d="M902 612.4v5.4" stroke="#484848" stroke-width="2.2"/><path d="M902 612.8v5" stroke="#fff" stroke-width=".8"/><defs><linearGradient id="scr" x1="0" y1="0" x2="1" y2="1"><stop offset="0" stop-color="#c8c8c4"/><stop offset="1" stop-color="#888884"/></linearGradient></defs><rect x="920.5" y="604.5" width="11" height="10" fill="#f4f4f4" stroke="#505050" stroke-width="1"/><rect x="922" y="606" width="8" height="7" fill="url(#scr)"/><path d="M921 617h10.5M926 614.6v2.4" stroke="#505050" stroke-width="1.2"/><path d="M917 602v4.2q0 2 2.4 2q2.4 0 2.4-2V602" fill="#fff" stroke="#484848" stroke-width="1.1"/><path d="M919.4 601.8v3" stroke="#484848" stroke-width="1"/><path d="M919.4 608.4v9" stroke="#484848" stroke-width="1.3"/><path d="M940.8 606.6 h2.6 l4.8 -4 v14.4 l-4.8 -4 h-2.6Z" fill="#fcfcfc" stroke="#707070" stroke-width="1"/><path d="M950 606.6 Q952 609.8 950 613 M952.4 604.6 Q955.6 609.8 952.4 615 " stroke="#808080" stroke-width="1.1" fill="none"/><path d="M954.4 603 Q958.2 609.8 954.4 616.6" stroke="#a0a0a0" stroke-width="1" fill="none"/></svg>

<span class="a" style="left:968px;top:596px;width:60px;text-align:center;font-size:11px;line-height:13px">11:23</span>
<span class="a" style="left:968px;top:612px;width:60px;text-align:center;font-size:11px;line-height:13px">07.03.2020</span>
<svg class="a" style="left:1033px;top:604px" width="17" height="13" viewBox="0 0 17 13"><rect x="0.5" y="0.5" width="16" height="11" fill="#2a6ad0" stroke="#88aadd"/><rect x="1" y="8" width="15" height="3" fill="#203050"/><rect x="1.5" y="8.5" width="3" height="2" fill="#e84020"/></svg>
</div></body></html>
